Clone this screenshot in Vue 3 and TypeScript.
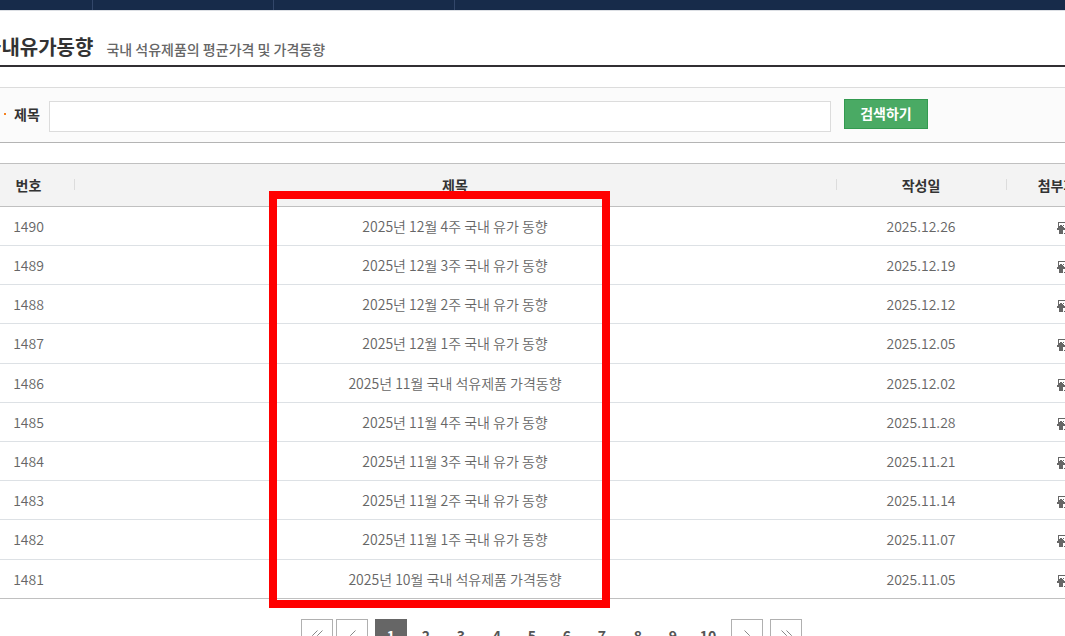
<script setup lang="ts">
import { ref } from 'vue'

interface Post {
  no: number
  title: string
  date: string
}

const keyword = ref('')
const current = ref(1)
const pages = [1, 2, 3, 4, 5, 6, 7, 8, 9, 10]

const posts: Post[] = [
  { no: 1490, title: '2025년 12월 4주 국내 유가 동향', date: '2025.12.26' },
  { no: 1489, title: '2025년 12월 3주 국내 유가 동향', date: '2025.12.19' },
  { no: 1488, title: '2025년 12월 2주 국내 유가 동향', date: '2025.12.12' },
  { no: 1487, title: '2025년 12월 1주 국내 유가 동향', date: '2025.12.05' },
  { no: 1486, title: '2025년 11월 국내 석유제품 가격동향', date: '2025.12.02' },
  { no: 1485, title: '2025년 11월 4주 국내 유가 동향', date: '2025.11.28' },
  { no: 1484, title: '2025년 11월 3주 국내 유가 동향', date: '2025.11.21' },
  { no: 1483, title: '2025년 11월 2주 국내 유가 동향', date: '2025.11.14' },
  { no: 1482, title: '2025년 11월 1주 국내 유가 동향', date: '2025.11.07' },
  { no: 1481, title: '2025년 10월 국내 석유제품 가격동향', date: '2025.11.05' },
]
</script>

<template>
  <div class="page">
    <nav class="gnb" aria-label="주 메뉴">
      <span v-for="n in 3" :key="n" class="gnb-item"></span>
    </nav>

    <main class="content">
      <header class="heading">
        <h1>국내유가동향</h1>
        <p>국내 석유제품의 평균가격 및 가격동향</p>
      </header>

      <form class="search" @submit.prevent>
        <label for="keyword">제목</label>
        <input id="keyword" v-model="keyword" type="text" />
        <button type="submit">검색하기</button>
      </form>

      <div class="board">
        <table>
          <colgroup>
            <col class="col-no" />
            <col />
            <col class="col-date" />
            <col class="col-file" />
          </colgroup>
          <thead>
            <tr>
              <th scope="col"><span>번호</span></th>
              <th scope="col"><span>제목</span></th>
              <th scope="col"><span>작성일</span></th>
              <th scope="col"><span>첨부파일</span></th>
            </tr>
          </thead>
          <tbody>
            <tr v-for="post in posts" :key="post.no">
              <td>{{ post.no }}</td>
              <td><a href="#">{{ post.title }}</a></td>
              <td>{{ post.date }}</td>
              <td>
                <a href="#" class="file" aria-label="첨부파일 내려받기">
                  <svg width="15" height="12" viewBox="0 0 15 12" shape-rendering="crispEdges">
                    <path d="M2 0h12v1H2zM2 1h1v4H2zM13 1h1v4h-1zM8 11h6v1H8zM13 8h1v3h-1zM7 3h1v1H7z" fill="#666" />
                    <path d="M4 3h2v1h1v1h1v1h1v2H7v4H3V8H1V6h1V5h1V4h1z" fill="#666" />
                  </svg>
                </a>
              </td>
            </tr>
          </tbody>
        </table>
        <div class="highlight"></div>
      </div>

      <nav class="paging" aria-label="페이지">
        <button type="button" class="arrow" aria-label="처음">
          <svg width="11" height="11" viewBox="0 0 11 11"><path d="M5.500 .5l-5 5 5 5M10.500 .5l-5 5 5 5" /></svg>
        </button>
        <button type="button" class="arrow prev" aria-label="이전">
          <svg width="11" height="11" viewBox="0 0 11 11"><path d="M8.500 .5l-5 5 5 5" /></svg>
        </button>
        <button
          v-for="p in pages"
          :key="p"
          type="button"
          class="num"
          :class="{ on: p === current }"
          @click="current = p"
        >{{ p }}</button>
        <button type="button" class="arrow next" aria-label="다음">
          <svg width="11" height="11" viewBox="0 0 11 11"><path d="M2.500 .5l5 5-5 5" /></svg>
        </button>
        <button type="button" class="arrow last" aria-label="마지막">
          <svg width="11" height="11" viewBox="0 0 11 11"><path d="M.5 .5l5 5-5 5M5.500 .5l5 5-5 5" /></svg>
        </button>
      </nav>
    </main>
  </div>
</template>

<style>
body {
  margin: 0;
  background: #fff;
  overflow: hidden;
}
</style>

<style scoped>
.page {
  overflow: hidden;
  font-family: "Noto Sans CJK KR", "Noto Sans", sans-serif;
  font-size: 14px;
  line-height: 20px;
  color: #666;
}
.page * {
  box-sizing: border-box;
}
button,
input {
  font: inherit;
  border-radius: 0;
}
a {
  color: inherit;
  text-decoration: none;
}

.gnb {
  display: flex;
  height: 11px;
  margin-left: -88px;
  background: #172b4a;
  border-bottom: 1px solid #dcdfe4;
}
.gnb-item {
  width: 181px;
  border-right: 1px solid #33476a;
}

.content {
  margin: 0 -56px 0 -17px;
}

.heading {
  display: flex;
  align-items: baseline;
  gap: 13px;
  height: 56px;
  padding-top: 21px;
  border-bottom: 2px solid #312f33;
}
.heading h1 {
  margin: 0;
  font-size: 20px;
  line-height: 30px;
  font-weight: 700;
  color: #333;
}
.heading p {
  margin: 0;
  font-weight: 500;
}

.search {
  display: flex;
  align-items: center;
  height: 56px;
  margin-top: 20px;
  padding: 0 193px 0 21px;
  background: #fbfbfb;
  border-top: 1px solid #dcdcdc;
  border-bottom: 1px solid #b4b4b4;
}
.search label {
  display: flex;
  align-items: center;
  gap: 8px;
  flex: none;
  margin: 0 9px 2px 0;
  font-weight: 700;
  color: #333;
}
.search label::before {
  content: "";
  width: 2px;
  height: 2px;
  background: #f58220;
}
.search input {
  flex: 1;
  min-width: 0;
  height: 31px;
  margin-top: 2px;
  padding: 0 8px;
  border: 1px solid #dcdcdc;
  background: #fff;
  color: #333;
}
.search button {
  flex: none;
  width: 84px;
  height: 30px;
  margin: 0 0 3px 13px;
  padding: 0 0 2px;
  border: 1px solid #339a50;
  background: #4aaa64;
  color: #fff;
  font-weight: 700;
}

.board {
  position: relative;
  margin-top: 20px;
}
table {
  width: 100%;
  table-layout: fixed;
  border-collapse: separate;
  border-spacing: 0;
  text-align: center;
}
.col-no {
  width: 91px;
}
.col-date {
  width: 170px;
}
.col-file {
  width: 115px;
}
th,
td {
  padding: 0;
}
th {
  height: 44px;
  background: #f3f3f3;
  border-top: 1px solid #c0c0c0;
  border-bottom: 1px solid #c0c0c0;
  font-weight: 700;
  color: #333;
}
th span {
  display: block;
  position: relative;
}
th + th span::before {
  content: "";
  position: absolute;
  left: 0;
  top: 4px;
  height: 11px;
  border-left: 1px solid #dcdcdc;
}
td {
  height: 39px;
  border-bottom: 1px solid #dde1e5;
  font-weight: 350;
}
tr:nth-child(5n + 4) td {
  height: 40px;
  padding-bottom: 1px;
}
tr:last-child td {
  border-bottom-color: #c0c0c0;
}
.file svg {
  display: block;
  margin: 3px auto 0;
}
.highlight {
  position: absolute;
  left: 286px;
  top: 28px;
  bottom: -9px;
  width: 341px;
  border: 8px solid #f00;
  pointer-events: none;
}

.paging {
  display: flex;
  justify-content: center;
  gap: 3px;
  margin-top: 20px;
  padding-right: 1px;
}
.paging button {
  width: 32px;
  height: 32px;
  padding: 0;
  border: 0;
  background: #fff;
  color: #555;
  font-weight: 700;
}
.paging .arrow {
  display: flex;
  align-items: center;
  justify-content: center;
  border: 1px solid #b0b0b0;
}
.paging .arrow path {
  fill: none;
  stroke: #888;
  stroke-width: 1;
}
.paging .num:nth-of-type(4n + 5) {
  margin-right: 1px;
}
.paging .prev {
  margin-right: 4px;
}
.paging .next,
.paging .last {
  margin-left: 4px;
}
.paging .on {
  background: #666;
  color: #fff;
}
</style>
